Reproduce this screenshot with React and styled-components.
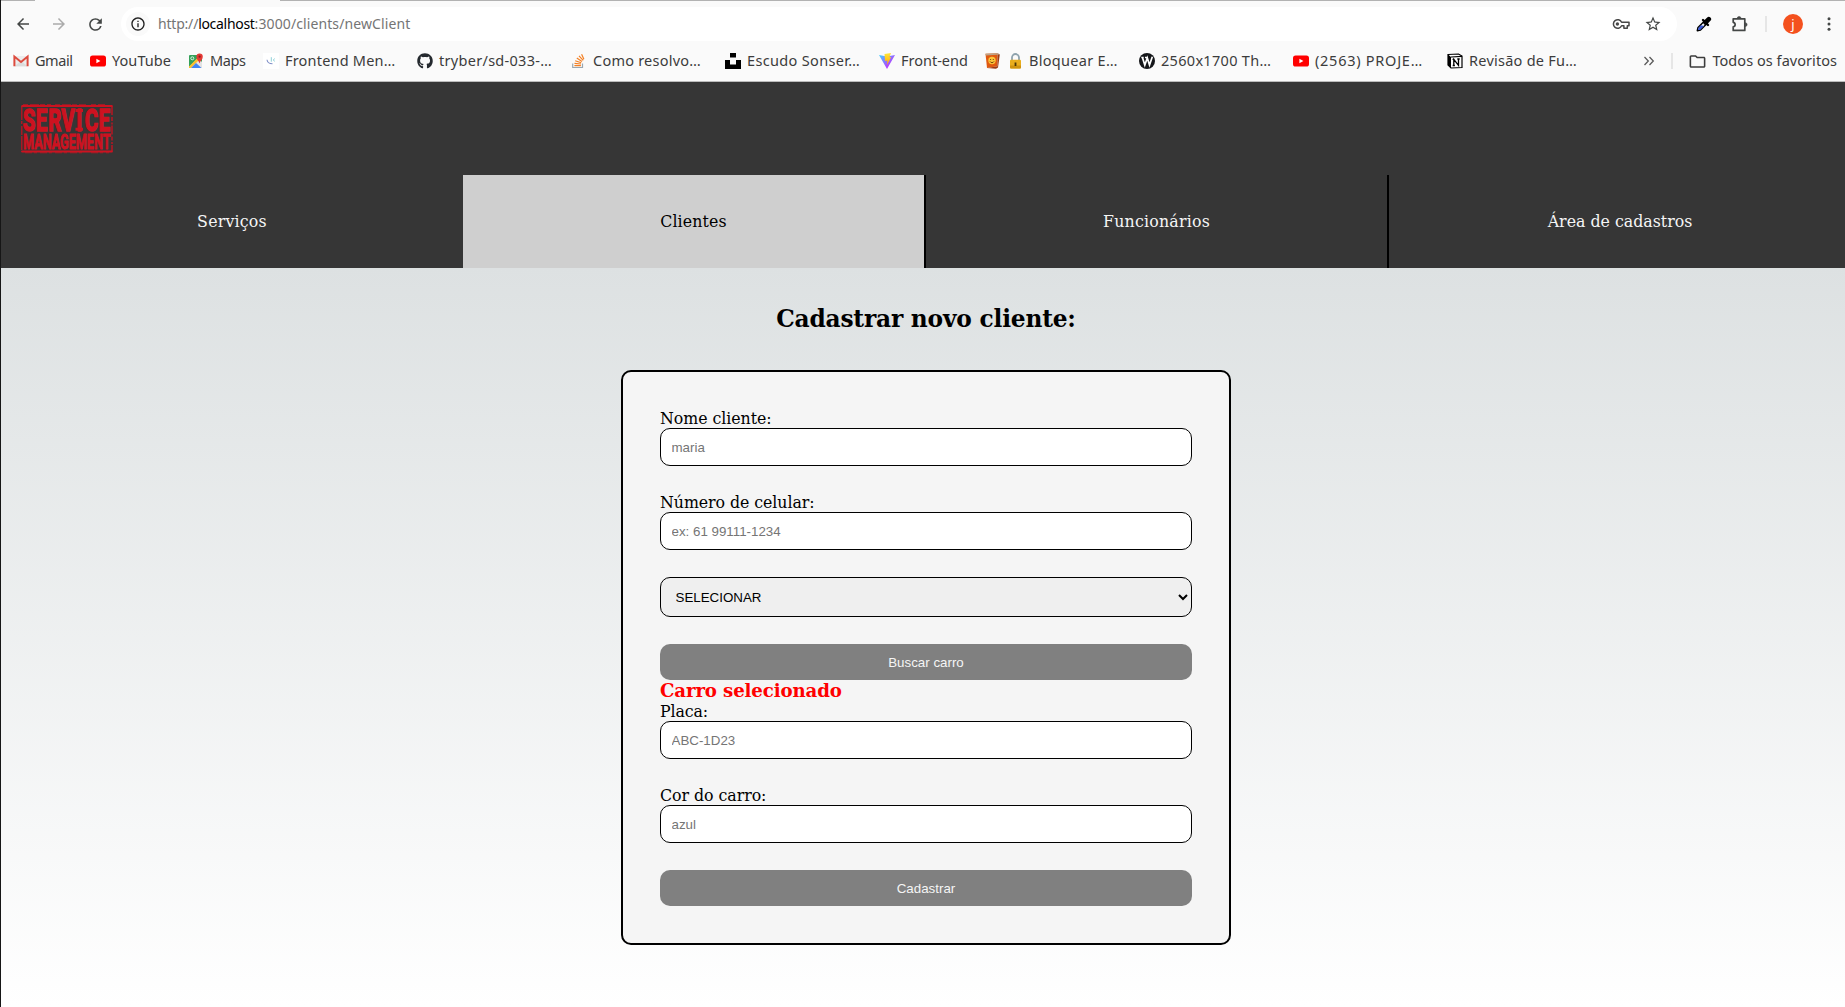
import React from 'react';
import styled, { createGlobalStyle } from 'styled-components';
import { MdArrowBack, MdArrowForward, MdRefresh, MdStarOutline, MdOutlineInfo, MdOutlineFolder } from 'react-icons/md';
import { FaGithub } from 'react-icons/fa';

const Global = createGlobalStyle`
  *, *::before, *::after { box-sizing: border-box; }
  html, body { margin: 0; padding: 0; overflow: hidden; background: #fff; }
`;

const serif = '"DejaVu Serif", "Noto Serif", serif';
const sans = '"Noto Sans", "Open Sans", sans-serif';
const control = '"Liberation Sans", Arial, sans-serif';

const Window = styled.div`
  display: flex;
  flex-direction: column;
  width: 1845px;
  height: 1007px;
  border-left: 1px solid #161616;
  overflow: hidden;
`;

/* ---------- browser chrome ---------- */
const Chrome = styled.div`
  display: flex;
  flex-direction: column;
  flex: none;
  height: 82px;
  background: #fafafa;
  border-bottom: 1px solid #bcbcbc;
  font-family: ${sans};
  color: #3c3c3c;
`;
const TabEdge = styled.div`
  display: grid;
  grid-template-columns: 34px 245px 1fr;
  height: 1px;
  background: #b2b2b2;
`;
const ActiveTab = styled.div`
  grid-column: 2;
  background: #fafafa;
`;
const Toolbar = styled.div`
  display: flex;
  align-items: center;
  height: 46px;
  padding-left: 4px;
`;
const Slot = styled.span`
  display: flex;
  align-items: center;
  justify-content: center;
  flex: none;
  width: ${p => p.$w || 36}px;
  height: 34px;
  color: ${p => p.$color || '#444746'};
`;
const AddressBar = styled.div`
  display: flex;
  align-items: center;
  flex: none;
  width: 1556px;
  height: 34px;
  margin: 0 9px 0 8px;
  padding: 0 8px 0 5px;
  border-radius: 17px;
  background: #fff;
`;
const SiteInfo = styled.span`
  display: flex;
  align-items: center;
  justify-content: center;
  width: 24px;
  height: 24px;
  margin-right: 8px;
  border-radius: 50%;
  background: #fafafa;
  color: #1f1f1f;
`;
const Url = styled.span`
  flex: 1;
  display: flex;
  font-size: 14px;
  line-height: 20px;
  color: #757575;
`;
const UrlPart = styled.span`
  letter-spacing: ${p => p.$track}px;
  color: ${p => (p.$host ? '#000' : 'inherit')};
`;
const Divider = styled.span`
  flex: none;
  width: 2px;
  height: 16px;
  background: #e6e6e6;
`;
const ToolDivider = styled(Divider)`
  margin: 0 16px 0 7px;
`;
const Avatar = styled.span`
  display: flex;
  align-items: center;
  justify-content: center;
  flex: none;
  width: 20px;
  height: 20px;
  margin-right: 10px;
  border-radius: 50%;
  background: #f4511e;
  color: #fff;
  font-size: 13px;
  line-height: 16px;
`;
const Bookmarks = styled.div`
  display: flex;
  align-items: center;
  height: 28px;
  padding-left: 12px;
`;
const Bookmark = styled.span`
  display: flex;
  align-items: center;
  flex: none;
  gap: ${p => p.$gap || 6}px;
  width: ${p => (p.$w ? `${p.$w}px` : 'auto')};
`;
const BookmarkLabel = styled.span`
  margin-top: -3px;
  font-size: 14.5px;
  line-height: 20px;
  letter-spacing: ${p => p.$track}px;
  white-space: nowrap;
`;
const BookmarkEnd = styled.span`
  display: flex;
  align-items: center;
  margin-left: auto;
  padding-right: 8px;
  gap: 15.5px;
`;

/* ---------- page ---------- */
const Page = styled.div`
  display: flex;
  flex-direction: column;
  flex: 1;
  width: 1850px;
  font-family: ${serif};
  color: #000;
`;
const Header = styled.header`
  background: #363636;
`;
const LogoArea = styled.div`
  height: 93px;
  padding: 22px 0 0 19.5px;
`;
const Nav = styled.nav`
  display: grid;
  grid-template-columns: 462px 463px 463px 462px;
  height: 93px;
`;
const NavItem = styled.a`
  display: flex;
  align-items: center;
  justify-content: center;
  border-right: ${p => (p.$divided ? '2px solid #000' : '0')};
  background: ${p => (p.$active ? '#cfcfcf' : 'transparent')};
  color: ${p => (p.$active ? '#000' : '#f5f5f5')};
  font-size: 15.8px;
  letter-spacing: ${p => p.$track}px;
`;
const Main = styled.main`
  display: flex;
  flex-direction: column;
  align-items: center;
  flex: 1;
  padding-top: 36px;
  background: linear-gradient(#dde1e2, #ffffff);
`;
const Title = styled.h1`
  margin: 0 0 36px;
  font-size: 23.3px;
  line-height: 30px;
  font-weight: 700;
  letter-spacing: -0.2px;
`;
const Card = styled.form`
  display: flex;
  flex-direction: column;
  width: 610px;
  height: 575px;
  padding: 37px;
  border: 2px solid #000;
  border-radius: 10px;
  background: #f5f5f5;
`;
const Field = styled.label`
  display: flex;
  flex-direction: column;
  margin-bottom: 27px;
`;
const FieldLabel = styled.span`
  font-size: 15.8px;
  line-height: 19px;
  letter-spacing: ${p => p.$track}px;
`;
const Input = styled.input`
  height: 38px;
  padding: 0 10.5px;
  border: 1px solid #000;
  border-radius: 10px;
  background: #fff;
  font-family: ${control};
  font-size: 13.333px;
  &::placeholder { color: #757575; }
`;
const Select = styled.select`
  flex: none;
  height: 40px;
  margin: 0 0 27px;
  padding: 0 10.5px;
  border: 1px solid #000;
  border-radius: 10px;
  background-color: #efefef;
  color: #000;
  font-family: ${control};
  font-size: 13.333px;
`;
const Button = styled.button`
  flex: none;
  height: 36px;
  border: 0;
  border-radius: 10px;
  background: #808080;
  color: #f5f5f5;
  font-family: ${control};
  font-size: 13.333px;
`;
const Selected = styled.h3`
  margin: 0;
  font-size: 18.2px;
  line-height: 22px;
  font-weight: 700;
  letter-spacing: -0.14px;
  color: #f00;
`;

/* ---------- drawings ---------- */
const Svg = ({ w = 16, h = w, box, children }) => (
  <svg width={w} height={h} viewBox={box || `0 0 ${w} ${h}`} fill="none">{children}</svg>
);
const Gmail = () => (
  <Svg>
    <path d="M1.5 3h13v10.5h-13z" fill="#ececec" />
    <path d="M1.5 13.3 8 8l6.500 5.300z" fill="#dcdcdc" />
    <path d="M1.400 13.300V3.600L8 9l6.600-5.400v9.700" stroke="#dd4b3e" strokeWidth="2" />
  </Svg>
);
const YouTube = () => (
  <Svg>
    <rect y="2.500" width="16" height="11" rx="2.600" fill="#f00" />
    <path d="M6.400 5.700v4.600L10.400 8z" fill="#fff" />
  </Svg>
);
const Maps = () => (
  <Svg>
    <rect x="1" y="2" width="13" height="13" rx="1" fill="#34a159" />
    <path d="M1 14 10 5l4 4v6H1z" fill="#e3e3e3" />
    <path d="M1 13.500 10.500 4l1.800 1.800L3 15H1z" fill="#fbc02d" />
    <path d="M3 15l5-5 5.500 5z" fill="#4285f4" />
    <circle cx="4.300" cy="5.300" r="1.500" stroke="#fff" strokeWidth=".8" />
    <path d="M11.500 10.500C11 8 8.400 6.600 8.400 3.800a3.200 3.200 0 0 1 6.400 0c0 2.800-2.800 4.200-3.300 6.700z" fill="#e53935" />
    <circle cx="11.600" cy="3.700" r="1.100" fill="#8c1d18" />
  </Svg>
);
const Mentor = () => (
  <Svg>
    <rect width="16" height="16" fill="#fff" />
    <path d="M4 6.800c.3 2.500 2 4 5.500 4" stroke="#8090c8" strokeWidth="1.100" />
    <path d="M8.300 4.200v4.500" stroke="#8fd0d8" strokeWidth="1" />
    <path d="M12 5.500 10 7l2 1.400" stroke="#a8dce0" strokeWidth="1" />
  </Svg>
);
const StackOverflow = () => (
  <Svg>
    <path d="M1.700 10.500v4h9.800v-4" stroke="#9aa7b0" strokeWidth="1.200" />
    <path d="M3.400 12.600h6.500M3.500 10.300l6.500.7M4.200 7.700l6 2.100M5.800 5l5.200 3.500M8 2.800l4.200 4.600M10.600 1.200l2.300 5" stroke="#f48024" strokeWidth="1.200" />
  </Svg>
);
const Unsplash = () => (
  <Svg><path d="M5 0h6v4.500H5zM0 7h5v4.500h6V7h5v9H0z" fill="#000" /></Svg>
);
const Vite = () => (
  <Svg>
    <defs>
      <linearGradient id="vp" x1="0" y1="0" x2="1" y2="1"><stop stopColor="#41d1ff" /><stop offset=".75" stopColor="#bd34fe" /></linearGradient>
      <linearGradient id="vy" x1="0" y1="0" x2="0" y2="1"><stop stopColor="#ffe83a" /><stop offset="1" stopColor="#ffa800" /></linearGradient>
    </defs>
    <path d="M0 2 8 16 16 2 8 3.400z" fill="url(#vp)" />
    <path d="M5.500 1 12 0l-1.600 4.200 1.800-.3L8 12l.4-4.600-2.400.5z" fill="url(#vy)" />
  </Svg>
);
const FaceBook = () => (
  <Svg>
    <path d="M.5.800 12.500.300v13L2 15z" fill="#e0590f" />
    <path d="M12.500.300 14.800 1.500 13 14.500 11 15.800 2 15l10.500-1.700z" fill="#9c3a12" />
    <path d="M.5.800 12.500.300l2.300 1.200L1 2.500z" fill="#b9a58c" />
    <circle cx="7" cy="7.500" r="3.700" fill="#fbc53a" />
    <path d="M5.600 6v1M8.300 6v1M5 8.400c.8 1.700 3.200 1.700 4 0" stroke="#6b3a08" strokeWidth=".9" />
  </Svg>
);
const Padlock = () => (
  <Svg w={13} h={16}>
    <path d="M3 8V4.500a3.500 3.500 0 0 1 7 0V8" stroke="#8fa3ad" strokeWidth="1.800" />
    <rect x="1" y="6.800" width="11" height="8.700" rx="1" fill="#e9ad1c" />
    <path d="M1 12.500h11v2a1 1 0 0 1-1 1H2a1 1 0 0 1-1-1z" fill="#cf930f" />
    <path d="M6.500 9.500v3.500" stroke="#4a3606" strokeWidth="1.800" />
  </Svg>
);
const WallpaperIcon = () => (
  <Svg>
    <circle cx="8" cy="8" r="8" fill="#15171a" />
    <path d="M2.300 4.500h2.400M6 4.500h2.600M3.500 4.800l2.300 7.200 2.500-7 2.200 7 2.800-8.300" stroke="#fff" strokeWidth="1.700" />
  </Svg>
);
const Notion = () => (
  <Svg>
    <path d="M1 1.500 11.500 1 15 3v11.500l-11 .5-3-3z" fill="#fff" stroke="#000" strokeWidth="1.200" />
    <path d="M1 1.500 4 4v11l-3-3z" fill="#000" />
    <path d="M4 4l11-.6" stroke="#000" strokeWidth="1.100" />
    <path d="M6.800 12.500V6.300l4.700 6V6M5.600 6.300h2M10.300 6h2.400M5.700 12.500h2.200" stroke="#000" strokeWidth="1.300" />
  </Svg>
);
const KeyIcon = () => (
  <Svg w={18} h={12}>
    <path d="M9.600 4.200A4.300 4.300 0 1 0 9.600 7.800h2.300v2.400h3.400V7.800H17V4.200z" stroke="#474747" strokeWidth="1.500" strokeLinejoin="round" />
    <circle cx="5.400" cy="6" r="1.700" fill="#474747" />
  </Svg>
);
const Eyedropper = () => (
  <Svg>
    <path d="M1.300 14.700 2 11.500 8.500 5l2.500 2.500L4.500 14z" fill="#fff" stroke="#000" strokeWidth="1.500" strokeLinejoin="round" />
    <path d="M2 14l.6-2.200L5 9.300l3 .7-4 4z" fill="#3c5bd6" />
    <path d="M7 4l5 5" stroke="#000" strokeWidth="2.400" strokeLinecap="round" />
    <path d="M9.500 6.500l3.300-3.300" stroke="#000" strokeWidth="4.600" strokeLinecap="round" />
  </Svg>
);
const Puzzle = () => (
  <Svg w={18} h={18}>
    <path d="M2.200 3.800h11.600v11.600H2.200v-3.500c2.600-.4 2.600-4.200 0-4.600z" stroke="#444746" strokeWidth="1.700" strokeLinejoin="round" />
    <path d="M6.200 3.400a1.900 1.900 0 0 1 3.800 0zM14.200 7.700a1.900 1.900 0 0 1 0 3.800z" fill="#444746" stroke="#444746" strokeWidth=".6" />
  </Svg>
);
const Dots = () => (
  <Svg w={4} h={16}>
    <circle cx="2" cy="2.800" r="1.500" fill="#444746" />
    <circle cx="2" cy="8" r="1.500" fill="#444746" />
    <circle cx="2" cy="13.200" r="1.500" fill="#444746" />
  </Svg>
);
const Chevrons = () => (
  <Svg w={12} h={10}>
    <path d="M1.500 1 5.300 5 1.500 9M6.500 1l3.800 4-3.800 4" stroke="#5a5a5a" strokeWidth="1.300" />
  </Svg>
);
const LogoSvg = styled.svg`
  display: block;
  overflow: visible;
`;
const Logo = () => (
  <LogoSvg width="92" height="50" viewBox="0 0 92 50" fill="none">
    <g stroke="#cd1220">
      <path d="M.5 2h91" strokeWidth="2" />
      <path d="M2 .700h28M34 .800h31M70 .700h14" strokeWidth=".8" strokeDasharray="5 2 9 1" />
      <path d="M.5 47.400h91" strokeWidth="2" />
      <path d="M4 48.800h60M70 48.800h18" strokeWidth=".7" strokeDasharray="7 2 3 3" />
      <path d="M.8 2v46" strokeWidth="1.100" strokeDasharray="14 1 3 2 9 1" />
      <path d="M91 2v46" strokeWidth="1.300" strokeDasharray="9 2 4 1.500 2 1" />
    </g>
    <g fill="#cd1220" stroke="#cd1220" fontFamily="Roboto, sans-serif" fontWeight="700">
      <text transform="scale(.67 1)" x="2.500 22 40.500 60 82.500 95 115.500" y="26.700" fontSize="30.500" strokeWidth="1.500">SERVICE</text>
      <path d="M54.500 6.500h7.500M54.500 25.200h7.500" strokeWidth="3" />
      <text x="2" y="44.700" fontSize="21" strokeWidth=".9" textLength="87.500" lengthAdjust="spacingAndGlyphs">MANAGEMENT</text>
    </g>
  </LogoSvg>
);

const bookmarks = [
  { label: 'Gmail', icon: <Gmail />, w: 77, track: -0.45 },
  { label: 'YouTube', icon: <YouTube />, w: 98, track: 0.06 },
  { label: 'Maps', icon: <Maps />, w: 75, track: -0.4 },
  { label: 'Frontend Men…', icon: <Mentor />, w: 154, track: 0.2 },
  { label: 'tryber/sd-033-…', icon: <FaGithub size={16} color="#24292e" />, w: 154, track: 0.29 },
  { label: 'Como resolvo…', icon: <StackOverflow />, w: 154, track: 0.23 },
  { label: 'Escudo Sonser…', icon: <Unsplash />, w: 154, track: 0.34 },
  { label: 'Front-end', icon: <Vite />, w: 106, track: 0 },
  { label: 'Bloquear E…', icon: <><FaceBook /><Padlock /></>, w: 154, track: 0.3, gap: 7.5 },
  { label: '2560x1700 Th…', icon: <WallpaperIcon />, w: 154, track: 0.3 },
  { label: '(2563) PROJE…', icon: <YouTube />, w: 154, track: 0.74 },
  { label: 'Revisão de Fu…', icon: <Notion />, w: 150, track: 0.25 },
];

const Browser = () => (
  <Chrome>
    <TabEdge><ActiveTab /></TabEdge>
    <Toolbar>
      <Slot><MdArrowBack size={18} /></Slot>
      <Slot $color="#ababab"><MdArrowForward size={18} /></Slot>
      <Slot><MdRefresh size={19} /></Slot>
      <AddressBar>
        <SiteInfo><MdOutlineInfo size={16} /></SiteInfo>
        <Url>
          <UrlPart $track={-0.2}>http://</UrlPart>
          <UrlPart $track={-0.3} $host>localhost</UrlPart>
          <UrlPart $track={0.1}>:3000/clients/newClient</UrlPart>
        </Url>
        <Slot $w={32}><KeyIcon /></Slot>
        <Slot $w={32}><MdStarOutline size={18} /></Slot>
      </AddressBar>
      <Slot><Eyedropper /></Slot>
      <Slot><Puzzle /></Slot>
      <ToolDivider />
      <Avatar>j</Avatar>
      <Slot $w={32}><Dots /></Slot>
    </Toolbar>
    <Bookmarks>
      {bookmarks.map(b => (
        <Bookmark key={b.label} $w={b.w} $gap={b.gap}>
          {b.icon}
          <BookmarkLabel $track={b.track}>{b.label}</BookmarkLabel>
        </Bookmark>
      ))}
      <BookmarkEnd>
        <Chevrons />
        <Divider />
        <Bookmark $gap={5}>
          <MdOutlineFolder size={19} />
          <BookmarkLabel $track={0.05}>Todos os favoritos</BookmarkLabel>
        </Bookmark>
      </BookmarkEnd>
    </Bookmarks>
  </Chrome>
);

const TextField = ({ label, track, placeholder }) => (
  <Field>
    <FieldLabel $track={track}>{label}</FieldLabel>
    <Input placeholder={placeholder} />
  </Field>
);

export default function App() {
  return (
    <Window>
      <Global />
      <Browser />
      <Page>
        <Header>
          <LogoArea><Logo /></LogoArea>
          <Nav>
            <NavItem $track={0.2}>Serviços</NavItem>
            <NavItem $track={0.15} $active $divided>Clientes</NavItem>
            <NavItem $track={0.2} $divided>Funcionários</NavItem>
            <NavItem $track={0}>Área de cadastros</NavItem>
          </Nav>
        </Header>
        <Main>
          <Title>Cadastrar novo cliente:</Title>
          <Card>
            <TextField label="Nome cliente:" track={-0.05} placeholder="maria" />
            <TextField label="Número de celular:" track={-0.06} placeholder="ex: 61 99111-1234" />
            <Select defaultValue="">
              <option value="">SELECIONAR</option>
            </Select>
            <Button type="button">Buscar carro</Button>
            <Selected>Carro selecionado</Selected>
            <TextField label="Placa:" track={-0.1} placeholder="ABC-1D23" />
            <TextField label="Cor do carro:" track={-0.05} placeholder="azul" />
            <Button type="button">Cadastrar</Button>
          </Card>
        </Main>
      </Page>
    </Window>
  );
}
